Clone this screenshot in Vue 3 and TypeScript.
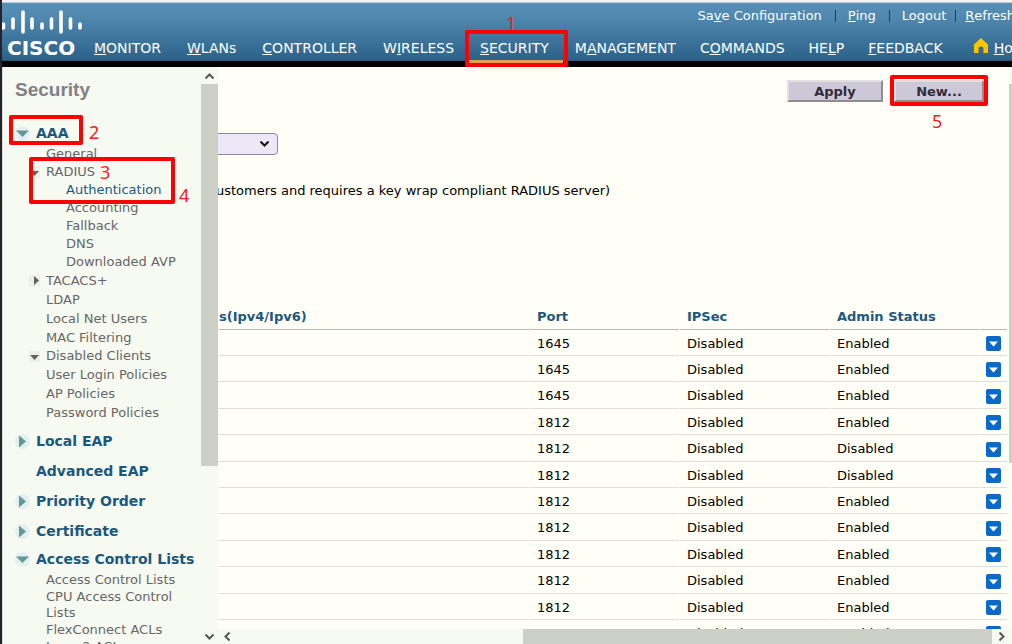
<script setup lang="ts">
import { ref } from 'vue'

interface NavItem { pre: string; key: string; post: string; active?: boolean }
interface TreeItem { label: string; level: 1 | 2; state?: 'open' | 'closed'; active?: boolean; marked?: boolean }
interface TreeGroup { label: string; state?: 'open' | 'closed'; compact?: boolean; marked?: boolean; items: TreeItem[] }
interface Server { port: number; ipsec: string; status: string }

const nav: NavItem[] = [
  { pre: '', key: 'M', post: 'ONITOR' },
  { pre: '', key: 'W', post: 'LANs' },
  { pre: '', key: 'C', post: 'ONTROLLER' },
  { pre: 'W', key: 'I', post: 'RELESS' },
  { pre: '', key: 'S', post: 'ECURITY', active: true },
  { pre: 'M', key: 'A', post: 'NAGEMENT' },
  { pre: 'C', key: 'O', post: 'MMANDS' },
  { pre: 'HE', key: 'L', post: 'P' },
  { pre: '', key: 'F', post: 'EEDBACK' },
]

const utilities: NavItem[] = [
  { pre: 'Sa', key: 'v', post: 'e Configuration' },
  { pre: '', key: 'P', post: 'ing' },
  { pre: 'Logout', key: '', post: '' },
  { pre: '', key: 'R', post: 'efresh' },
]

const groups: TreeGroup[] = [
  {
    label: 'AAA', state: 'open', marked: true,
    items: [
      { label: 'General', level: 1 },
      { label: 'RADIUS', level: 1, state: 'open', marked: true },
      { label: 'Authentication', level: 2, active: true },
      { label: 'Accounting', level: 2 },
      { label: 'Fallback', level: 2 },
      { label: 'DNS', level: 2 },
      { label: 'Downloaded AVP', level: 2 },
      { label: 'TACACS+', level: 1, state: 'closed' },
      { label: 'LDAP', level: 1 },
      { label: 'Local Net Users', level: 1 },
      { label: 'MAC Filtering', level: 1 },
      { label: 'Disabled Clients', level: 1, state: 'open' },
      { label: 'User Login Policies', level: 1 },
      { label: 'AP Policies', level: 1 },
      { label: 'Password Policies', level: 1 },
    ],
  },
  { label: 'Local EAP', state: 'closed', items: [] },
  { label: 'Advanced EAP', items: [] },
  { label: 'Priority Order', state: 'closed', items: [] },
  { label: 'Certificate', state: 'closed', items: [] },
  {
    label: 'Access Control Lists', state: 'open', compact: true,
    items: [
      { label: 'Access Control Lists', level: 1 },
      { label: 'CPU Access Control Lists', level: 1 },
      { label: 'FlexConnect ACLs', level: 1 },
      { label: 'Layer2 ACLs', level: 1 },
    ],
  },
]

const servers: Server[] = Array.from({ length: 12 }, (_, i) => ({
  port: i < 3 ? 1645 : 1812,
  ipsec: 'Disabled',
  status: i === 4 || i === 5 ? 'Disabled' : 'Enabled',
}))

const stationType = ref('')
</script>

<template>
  <div class="app">
    <header class="banner">
      <div class="brand">
        <svg class="bars" viewBox="0 0 80 26" width="80" height="26" aria-hidden="true">
          <g stroke="#fff" stroke-width="3.6" stroke-linecap="round">
            <path d="M1.5 15v4M11 10v9M21 3v20M30 10v9M40 15v4M49.500 10v9M59 3v20M68.500 10v9M78 15v4" />
          </g>
        </svg>
        <span class="wordmark">CISCO</span>
      </div>
      <div class="menus">
        <nav class="utility" aria-label="Utility">
          <a v-for="u in utilities" :key="u.post + u.pre" href="#">{{ u.pre }}<u>{{ u.key }}</u>{{ u.post }}</a>
        </nav>
        <nav class="primary" aria-label="Main">
          <a v-for="n in nav" :key="n.post" href="#" :class="{ active: n.active }">{{ n.pre }}<u>{{ n.key }}</u>{{ n.post }}<template v-if="n.active"><span class="mark mark-security"></span><span class="step step-1">1</span></template></a>
          <a href="#" class="home">
            <svg width="14" height="16" viewBox="0 0 14 16" aria-hidden="true"><path d="M7 0L14 6.500V15H9.500V10.500Q9.500 8.500 7 8.500T4.500 10.500V15H0V6.500Z" fill="#ffc600" /></svg>
            <span><u>H</u>ome</span>
          </a>
        </nav>
      </div>
    </header>

    <div class="body">
      <aside class="sidebar">
        <div class="tree">
          <h2>Security</h2>
          <section v-for="g in groups" :key="g.label" :class="{ compact: g.compact }">
            <h3>
              <svg class="arrow" width="15" height="15" viewBox="0 0 15 15" aria-hidden="true">
                <template v-if="g.state">
                  <circle cx="7.500" cy="7.500" r="7.500" fill="#e4f0ef" />
                  <path v-if="g.state === 'open'" d="M1 4.500H14L7.500 11Z" fill="#629895" />
                  <path v-else d="M4 1.500V13.500L11 7.500Z" fill="#629895" />
                </template>
              </svg>
              <a href="#">{{ g.label }}</a>
              <template v-if="g.marked"><span class="mark mark-aaa"></span><span class="step step-2">2</span></template>
            </h3>
            <ul v-if="g.items.length">
              <li v-for="i in g.items" :key="i.label" :class="['level-' + i.level, i.state, { active: i.active }]">
                <svg v-if="i.state" class="fold" width="11" height="11" viewBox="0 0 11 11" aria-hidden="true">
                  <rect width="11" height="11" fill="#eef0e8" />
                  <path v-if="i.state === 'open'" d="M1 4H10L5.500 9Z" fill="#62625a" />
                  <path v-else d="M5 1V10L10 5.500Z" fill="#62625a" />
                </svg>
                <a href="#">{{ i.label }}</a>
                <template v-if="i.marked">
                  <span class="mark mark-radius"></span><span class="step step-3">3</span><span class="step step-4">4</span>
                </template>
              </li>
            </ul>
          </section>
        </div>
        <div class="vbar">
          <button type="button" aria-label="Scroll up"><svg width="9" height="6" viewBox="0 0 9 6"><path d="M.5 5.500L4.500 1.500L8.500 5.500" /></svg></button>
          <div class="track"><div class="thumb"></div></div>
          <button type="button" aria-label="Scroll down"><svg width="9" height="6" viewBox="0 0 9 6"><path d="M.5 .5L4.500 4.500L8.500 .5" /></svg></button>
        </div>
      </aside>

      <div class="frame">
        <div class="view">
          <main>
            <div class="actions">
              <button type="button">Apply</button>
              <div class="target">
                <button type="button">New...</button>
                <span class="mark mark-new"></span><span class="step step-5">5</span>
              </div>
            </div>
            <div class="picker">
              <select v-model="stationType" aria-label="Called station ID type"><option value=""></option></select>
              <svg width="9" height="6" viewBox="0 0 9 6" aria-hidden="true"><path d="M.5 .5L4.500 4.500L8.500 .5" /></svg>
            </div>
            <p>ustomers and requires a key wrap compliant RADIUS server)</p>
            <table>
              <colgroup><col /><col class="wide" /><col class="wide" /><col class="wide" /><col class="narrow" /></colgroup>
              <thead>
                <tr><th class="first">s(Ipv4/Ipv6)</th><th>Port</th><th>IPSec</th><th>Admin Status</th><th></th></tr>
              </thead>
              <tbody>
                <tr v-for="(s, i) in servers" :key="i">
                  <td></td>
                  <td>{{ s.port }}</td>
                  <td>{{ s.ipsec }}</td>
                  <td>{{ s.status }}</td>
                  <td>
                    <button type="button" class="drop" aria-label="Row actions"><svg width="15" height="15" viewBox="0 0 15 15"><path d="M3 5.500H12L7.500 10.500Z" fill="#fff" /></svg></button>
                  </td>
                </tr>
              </tbody>
            </table>
          </main>
          <div class="edge"></div>
        </div>
        <div class="hbar">
          <button type="button" aria-label="Scroll left"><svg width="6" height="9" viewBox="0 0 6 9"><path d="M5.500 .5L1.500 4.500L5.500 8.500" /></svg></button>
          <div class="track"><div class="thumb"></div></div>
          <button type="button" aria-label="Scroll right"><svg width="6" height="9" viewBox="0 0 6 9"><path d="M.5 .5L4.500 4.500L.5 8.500" /></svg></button>
        </div>
      </div>
    </div>
  </div>
</template>

<style>
body { margin: 0; overflow: hidden; }
</style>

<style scoped>
* { box-sizing: border-box; }
.app {
  display: flex;
  flex-direction: column;
  height: 100vh;
  overflow: hidden;
  border-left: 2px solid #25222b;
  background: #fffff7;
  font-family: "DejaVu Sans", Verdana, sans-serif;
  font-size: 13px;
  color: #000;
}
a { color: inherit; text-decoration: none; }
h2, h3, ul, p { margin: 0; padding: 0; }
ul { list-style: none; }
button { font-family: inherit; padding: 0; }

.banner {
  display: flex;
  flex: none;
  height: 67px;
  border-top: 2px solid #f4f4f6;
  border-bottom: 6px solid #000;
  background: linear-gradient(#b5ccda 0 1px, #5990b6 1px, #4e86ae 30%, #3f769e 60%, #2d6389 97%, #275574);
  color: #fff;
}
.brand {
  display: flex;
  flex-direction: column;
  flex: none;
  width: 79px;
  padding-top: 7px;
}
.bars { flex: none; }
.wordmark {
  padding-left: 5px;
  font-size: 20px;
  line-height: 26px;
  font-weight: bold;
}
.menus { flex: 1; min-width: 0; }
.utility {
  display: flex;
  justify-content: flex-end;
  height: 27px;
  margin-right: -3px;
  line-height: 27px;
  white-space: nowrap;
}
.utility a { display: flex; align-items: center; white-space: pre; }
.utility a + a::before {
  content: "";
  width: 1px;
  height: 12px;
  margin: 0 12px 0 13px;
  background: #1d3d6b;
}
.utility a:last-child::before { margin: 0 9px; }
.primary {
  display: flex;
  height: 37px;
  font-size: 14px;
  line-height: 38px;
  white-space: nowrap;
}
.primary a { position: relative; padding: 0 13px; }
.primary a.active { padding-right: 14px; border-bottom: 6px solid #e3a04d; }
.primary a.active ~ a { padding: 0 12px; }
.primary a.active ~ a.home { display: flex; gap: 6px; align-items: center; padding: 0 0 0 19px; height: 37px; }
.primary a.home svg { flex: none; margin-bottom: 3px; }

.mark { position: absolute; border: 4px solid #f00; border-radius: 2px; pointer-events: none; }
.step {
  position: absolute;
  color: #f21a22;
  font: normal 18px/14px "Noto Sans", sans-serif;
}
.mark-security { left: -2px; right: -5px; top: 1px; height: 37px; }
.step-1 { left: 39px; top: -13px; }
.mark-aaa { left: 7px; top: -7px; width: 74px; height: 30px; }
.step-2 { left: 87px; top: 3px; }
.mark-radius { left: 27px; top: -6px; width: 146px; height: 47px; }
.step-3 { left: 98px; top: 2px; }
.step-4 { left: 177px; top: 25px; }
.mark-new { left: -4px; top: -5px; right: -4px; height: 31px; }
.step-5 { left: 38px; top: 34px; }

.body { display: flex; flex: 1; min-height: 0; }
.sidebar {
  display: flex;
  flex: none;
  width: 216px;
  background: #f7faf0;
}
.tree { flex: 1; min-width: 0; overflow: hidden; border-left: 1px solid #dcded6; margin-right: -17px; padding-right: 30px; }
h2 {
  padding: 12px 0 13px 12px;
  color: #808086;
  font: bold 19px/22px "Liberation Sans", Arial, sans-serif;
}
h3 {
  position: relative;
  display: flex;
  align-items: center;
  gap: 6px;
  height: 22px;
  margin-top: 8px;
  margin-left: -1px;
  padding-left: 13px;
  color: #1b5880;
  font-size: 14px;
  white-space: nowrap;
}
.compact h3 { margin-top: 6px; }
.compact ul { padding-top: 1px; }
.arrow { flex: none; }
li {
  position: relative;
  margin-left: -1px;
  padding-left: 44px;
  line-height: 19px;
  color: #66666a;
}
li.level-2 { padding-left: 64px; line-height: 18px; }
li.open { line-height: 18px; }
li.active { color: #1b5880; }
.compact li { padding-top: 1px; line-height: 16px; }
.fold { position: absolute; left: 27px; top: 4px; }

button svg, .picker svg { display: block; fill: none; stroke: #555950; stroke-width: 2; }
.vbar {
  display: flex;
  flex-direction: column;
  flex: none;
  width: 17px;
  background: #f7faf0;
  z-index: 1;
}
.vbar button, .hbar button {
  display: grid;
  place-items: center;
  flex: none;
  width: 17px;
  height: 17px;
  border: 0;
  background: #f7faf0;
}
.vbar button:last-child { height: 15px; }
.track { flex: 1; min-width: 0; }
.vbar .thumb { height: 70%; background: #cdd0c7; }

.frame { display: flex; flex-direction: column; flex: 1; min-width: 0; }
.view { display: flex; flex: 1; min-height: 0; }
main { flex: 1; min-width: 0; overflow: hidden; padding-right: 1px; }
.edge { flex: none; width: 3px; border-top: 17px solid #f7faf0; margin-bottom: 166px; background: #cdd0c7; }
.hbar { display: flex; flex: none; height: 15px; background: #f7faf0; }
.hbar button { height: 15px; }
.hbar button:last-child { width: 20px; }
.hbar .thumb { width: 62%; height: 100%; margin-left: auto; background: #cdd0c7; }

.actions {
  display: flex;
  justify-content: flex-end;
  gap: 11px;
  padding: 13px 24px 0 0;
}
.actions button {
  display: block;
  width: 96px;
  height: 22px;
  border: 2px solid;
  border-color: #e2e0e0 #8e8d90 #8e8d90 #e2e0e0;
  background: #cdc8d8;
  color: #302c36;
  font-size: 13px;
  font-weight: bold;
}
.target { position: relative; }
.target button { width: 90px; }
.picker { display: flex; align-items: center; margin: 31px 0 0 -80px; }
select {
  width: 140px;
  height: 22px;
  appearance: none;
  border: 1px solid #8d899c;
  border-radius: 4px;
  background: #ede8f8;
}
.picker svg { margin-left: -18px; stroke: #111; pointer-events: none; }
p { margin-left: -2px; padding: 26px 0 0; line-height: 20px; white-space: nowrap; }
table {
  width: 100%;
  margin-top: 103px;
  table-layout: fixed;
  border-collapse: separate;
  border-spacing: 1px 0;
}
.wide { width: 149px; }
.narrow { width: 27px; }
th, td { padding: 0 0 0 7px; text-align: left; line-height: 20px; }
th { height: 26px; border-bottom: 1px solid #b9bab3; color: #1b5880; }
th.first { padding-left: 0; }
td { height: 26px; padding-top: 2px; border-bottom: 1px solid #dcdfd6; }
th:last-child, td:last-child { padding-left: 6px; }
tbody tr:nth-child(5n) td, tbody tr:nth-child(5n + 3) td { height: 27px; }
.drop { display: block; width: 15px; height: 15px; border: 0; border-radius: 2px; background: #0969c8; }
.drop svg { stroke: none; }
</style>
